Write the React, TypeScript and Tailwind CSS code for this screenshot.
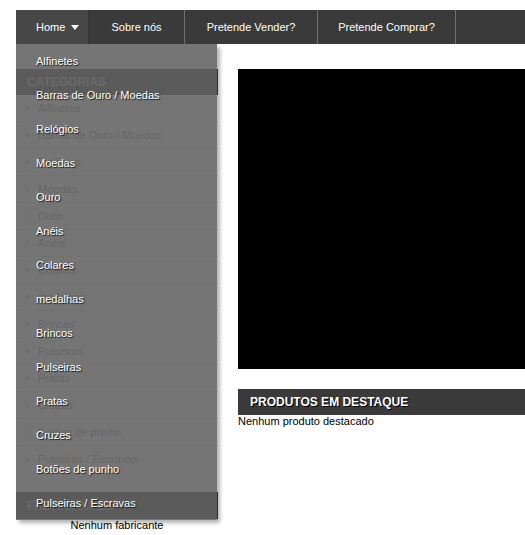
import React from "react";

const cats = [
  "Alfinetes",
  "Barras de Ouro / Moedas",
  "Relógios",
  "Moedas",
  "Ouro",
  "Anéis",
  "Colares",
  "medalhas",
  "Brincos",
  "Pulseiras",
  "Pratas",
  "Cruzes",
  "Botões de punho",
  "Pulseiras / Escravas",
];

export default function App() {
  return (
    <div className="w-[525px] h-[535px] overflow-hidden bg-white font-['Liberation_Sans',Arial,sans-serif] text-[11px] text-black">
      <div className="w-[1000px] pl-4 pt-[10px]">
        {/* NAV */}
        <nav className="relative z-10 flex h-[34px] bg-[#3a3a3a] text-white text-[11px] leading-[34px]">
          <div className="relative flex w-[73px] items-center bg-[#474747] border-r border-[#333] pl-5">
            <span>Home</span>
            <span className="ml-[6px] mt-[1px] h-0 w-0 border-x-[4.5px] border-t-[5px] border-x-transparent border-t-white" />
            {/* dropdown */}
            <div className="absolute left-0 top-[34px] w-[201px] bg-[rgba(96,96,96,0.87)] shadow-[3px_3px_4px_rgba(0,0,0,0.3)]">
              {cats.map((c) => (
                <div
                  key={c}
                  className="flex h-[34px] items-center pl-5 text-white leading-none [text-shadow:1px_1px_1px_rgba(0,0,0,0.8)]"
                >
                  {c}
                </div>
              ))}
            </div>
          </div>
          <div className="flex w-[96px] items-center justify-center border-r border-[#707070]">Sobre nós</div>
          <div className="flex w-[133px] items-center justify-center border-r border-[#707070]">Pretende Vender?</div>
          <div className="flex w-[138px] items-center justify-center border-r border-[#707070]">Pretende Comprar?</div>
        </nav>

        {/* CONTENT */}
        <div className="mt-[25px] flex gap-5">
          {/* sidebar */}
          <aside className="w-[202px] shrink-0">
            <div className="flex h-[26px] items-center bg-[#3a3a3a] pl-[11px] text-[12px] font-bold uppercase text-[#a0a0a0]">
              Categorias
            </div>
            <ul>
              {cats.map((c, i) => (
                <li
                  key={c}
                  className={`flex h-[27px] items-center pl-[10px] text-[#888] ${
                    i < cats.length - 1 ? "border-b border-dotted border-[#cfcfcf]" : ""
                  }`}
                >
                  <span className="mr-[8px] h-0 w-0 border-y-[3px] border-l-4 border-y-transparent border-l-[#c8c8c8]" />
                  {c}
                </li>
              ))}
            </ul>
            <div className="mt-[19px] flex h-[27px] items-center bg-[#3a3a3a] pl-[11px] text-[12px] font-bold uppercase text-[#a0a0a0]">
              Fabricantes
            </div>
            <div className="text-center leading-[12px]">Nenhum fabricante</div>
          </aside>

          {/* main */}
          <main className="w-[740px]">
            <div className="h-[300px] bg-black" />
            <div className="mt-5 flex h-[26px] items-center bg-[#3a3a3a] pl-3 text-[12px] font-bold uppercase text-white [text-shadow:1px_1px_0_#000]">
              Produtos em destaque
            </div>
            <div className="leading-[13px]">Nenhum produto destacado</div>
          </main>
        </div>
      </div>
    </div>
  );
}
